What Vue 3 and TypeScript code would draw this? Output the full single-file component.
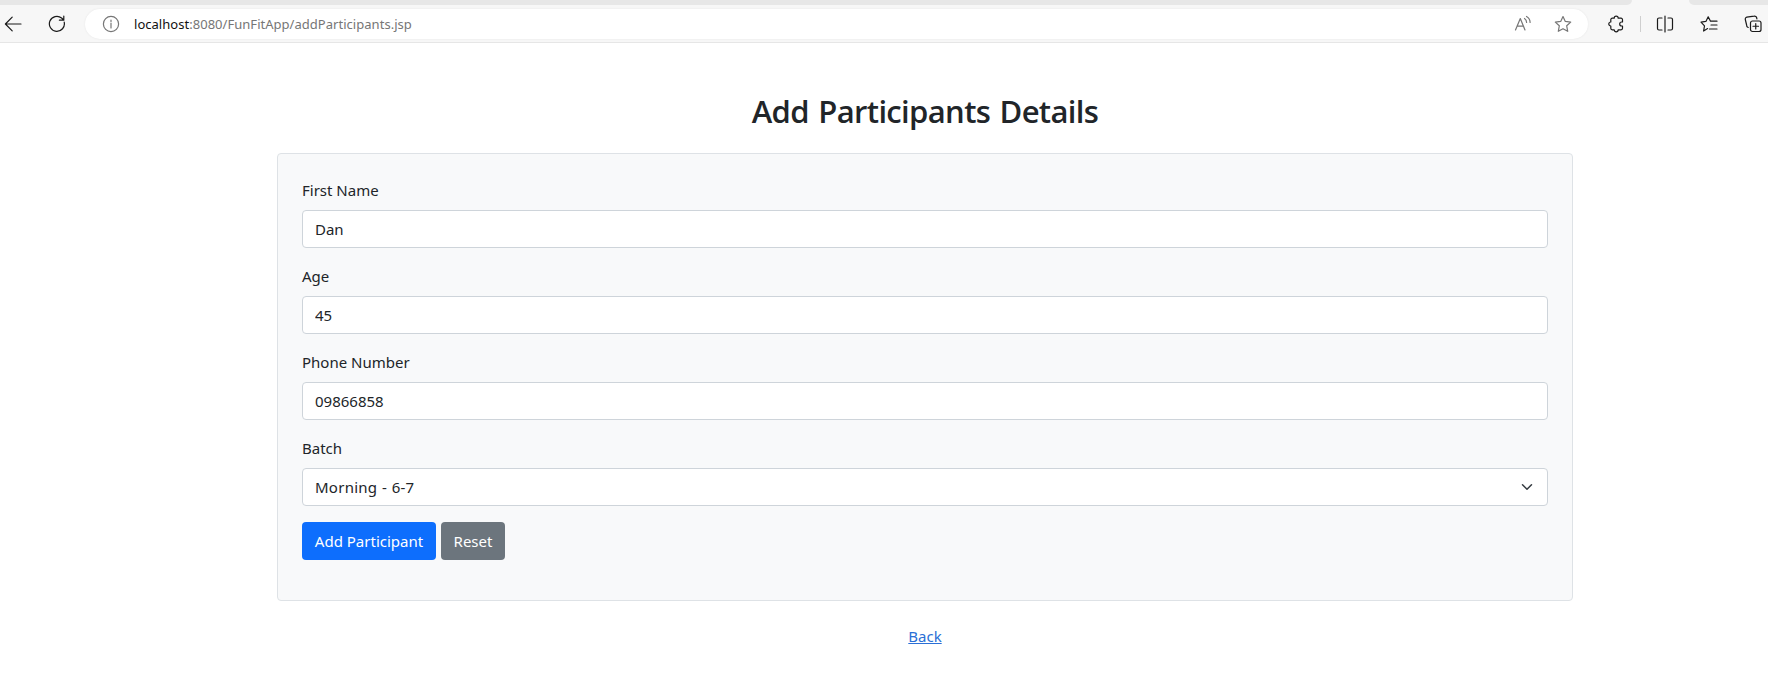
<script setup lang="ts">
import { ref } from 'vue'

interface Field {
  id: string
  label: string
  value: string
}

const initial = (): Field[] => [
  { id: 'name', label: 'First Name', value: 'Dan' },
  { id: 'age', label: 'Age', value: '45' },
  { id: 'phone', label: 'Phone Number', value: '09866858' },
]

const fields = ref<Field[]>(initial())
const batch = ref('Morning - 6-7')

function reset() {
  fields.value = initial()
  batch.value = 'Morning - 6-7'
}
</script>

<template>
  <div class="window">
    <header class="browser">
      <div class="tabs">
        <div class="tab-rest"></div>
        <div class="tab-active"></div>
        <div class="tab-tail"></div>
      </div>
      <div class="toolbar">
        <svg class="ico back" viewBox="0 0 18 18"><path d="M17 9H1.5M8.2 2.2 1.4 9l6.8 6.8" /></svg>
        <svg class="ico reload" viewBox="0 0 18 18"><path d="M16.2 7.2A7.5 7.5 0 1 1 13.6 3l1.9 1.8M15.8 1v4.2h-4.4" /></svg>
        <div class="address">
          <svg class="ico info" viewBox="0 0 18 18"><circle cx="9" cy="9" r="7.6" /><path d="M9 8v5" /><path d="M9 5v1.4" /></svg>
          <span class="url"><b>localhost</b>:8080/FunFitApp/addParticipants.jsp</span>
          <svg class="ico read" viewBox="0 0 18 18"><path d="M1.5 15 6.300 3.500l4.700 11.500M3 11.200h6.600M10.500 3.500c1.400.9 2.100 2.200 2.100 4M12.500 1.500c2.400 1.400 3.600 3.500 3.600 6" /></svg>
          <svg class="ico star" viewBox="0 0 18 18"><path d="m9 1.500 2.300 4.900 5.400.7-4 3.700 1 5.500L9 13.700l-4.700 2.600 1-5.500-4-3.700 5.400-.7z" /></svg>
        </div>
        <svg class="ico puzzle" viewBox="0 0 18 18"><path d="M5.300 3.200h1.900a2 2 0 0 1 4 0h2.800a1.500 1.500 0 0 1 1.500 1.500V7h-.8a2 2 0 0 0 0 4h.8v2.300a1.500 1.500 0 0 1-1.500 1.500h-2.800a2 2 0 0 1-4 0H5.300a1.500 1.500 0 0 1-1.500-1.500V11a2 2 0 0 1 0-4V4.700a1.500 1.500 0 0 1 1.500-1.500z" /></svg>
        <i class="divider"></i>
        <svg class="ico split" viewBox="0 0 18 18"><path d="M6 3H3a1.500 1.500 0 0 0-1.500 1.500v9A1.500 1.500 0 0 0 3 15h3M12 3h3a1.500 1.500 0 0 1 1.500 1.500v9A1.500 1.500 0 0 1 15 15h-3M9 1v16" /></svg>
        <svg class="ico favs" viewBox="0 0 18 18"><path d="M7.600 13.600 3.600 16l.9-5.200L1 7.100l4.900-.7L8.200 1.800l2.300 4.400H17M11 10h6M9.500 14H17" /></svg>
        <svg class="ico collections" viewBox="0 0 18 18"><path d="M4.200 12.500A2.500 2.500 0 0 1 2.600 10L1.300 4.500a2 2 0 0 1 1.500-2.400L10 1.100A2.200 2.200 0 0 1 12.700 3l.2.800" /><rect x="6.500" y="6" width="10.500" height="10.500" rx="2" /><path d="M11.750 8.500v5.500M9 11.250h5.500" /></svg>
      </div>
    </header>

    <main class="container">
      <h2 class="title">Add Participants Details</h2>
      <form class="card" @submit.prevent @reset.prevent="reset">
        <div v-for="f in fields" :key="f.id" class="group">
          <label :for="f.id">{{ f.label }}</label>
          <input :id="f.id" v-model="f.value" class="control" type="text" />
        </div>
        <div class="group">
          <label for="batch">Batch</label>
          <div class="select-wrap">
            <select id="batch" v-model="batch" class="control select">
              <option>Morning - 6-7</option>
            </select>
            <svg class="chevron" viewBox="0 0 16 16"><path d="m2 5 6 6 6-6" /></svg>
          </div>
        </div>
        <div class="actions">
          <button class="btn primary" type="submit">Add Participant</button>
          <button class="btn secondary" type="reset">Reset</button>
        </div>
      </form>
      <a class="back-link" href="#">Back</a>
    </main>
  </div>
</template>

<style>
body { margin: 0; background: #fff; overflow: hidden; }
</style>

<style scoped>
* { box-sizing: border-box; }
.window {
  width: 1768px;
  height: 696px;
  overflow: hidden;
  background: #fff;
  color: #212529;
  font-family: "Noto Sans", "Open Sans", sans-serif;
  font-size: 15px;
  line-height: 24px;
}
.browser { height: 43px; background: #f7f7f7; border-bottom: 1px solid #e6e6e6; }
.tabs { display: flex; height: 5px; background: #f7f7f7; }
.tab-rest { width: 1632px; background: #e7e7e7; border-bottom-right-radius: 5px; }
.tab-active { width: 57px; }
.tab-tail { flex: 1; background: #e7e7e7; border-bottom-left-radius: 5px; }
.toolbar { display: flex; align-items: center; height: 38px; }
.ico {
  width: 18px;
  height: 18px;
  flex: none;
  fill: none;
  stroke: #1b1b1b;
  stroke-width: 1.2;
  stroke-linejoin: round;
  stroke-linecap: round;
}
.back { margin-left: 4px; }
.reload { margin-left: 26px; }
.address {
  display: flex;
  align-items: center;
  width: 1503px;
  height: 30px;
  margin-left: 19px;
  padding: 0 16px 0 17px;
  border-radius: 15px;
  background: #fff;
  box-shadow: 0 0 2px #e4e4e4;
}
.address .ico { stroke: #767676; }
.url { margin-left: 14px; font-size: 13px; letter-spacing: 0.03px; color: #767676; white-space: nowrap; }
.url b { font-weight: 400; color: #111; }
.read { margin-left: auto; }
.star { margin-left: 22px; }
.puzzle { margin-left: 19px; }
.divider { width: 1px; height: 16px; margin-left: 15px; background: #cfcfcf; }
.split { margin-left: 15px; }
.favs { margin-left: 26px; }
.collections { margin-left: 26px; }

.container { width: 1296px; margin: 0 0 0 277px; padding-top: 49px; display: flex; flex-direction: column; }
.title {
  margin: 0 0 22px;
  height: 39px;
  text-align: center;
  font-family: "Open Sans", "Noto Sans", sans-serif;
  font-size: 31px;
  font-weight: 600;
  line-height: 38px;
  letter-spacing: -0.65px;
  word-spacing: 2px;
}
.card {
  height: 448px;
  padding: 24px;
  border: 1px solid #dee2e6;
  border-radius: 4px;
  background: #f8f9fa;
}
.group { margin-bottom: 16px; }
.group label { display: block; height: 24px; margin-bottom: 8px; }
.control {
  display: block;
  width: 100%;
  height: 38px;
  margin: 0;
  padding: 0 12px;
  border: 1px solid #ced4da;
  border-radius: 4px;
  background: #fff;
  color: #212529;
  font: inherit;
  outline: none;
  appearance: none;
}
.select { letter-spacing: 0.25px; word-spacing: 0.5px; }
.select-wrap { position: relative; }
.chevron {
  position: absolute;
  right: 15px;
  top: 13px;
  width: 12px;
  height: 12px;
  fill: none;
  stroke: #343a40;
  stroke-width: 2;
  stroke-linecap: round;
  stroke-linejoin: round;
  pointer-events: none;
}
.actions { display: flex; gap: 5px; }
.btn {
  height: 38px;
  padding: 0;
  border: 0;
  border-radius: 4px;
  color: #fff;
  font: inherit;
  text-align: center;
  white-space: nowrap;
}
.primary { width: 134px; background: #0d6efd; }
.secondary { width: 64px; background: #6c757d; }
.back-link { align-self: center; margin-top: 23px; color: #2a6fd6; text-decoration: underline; }
</style>
